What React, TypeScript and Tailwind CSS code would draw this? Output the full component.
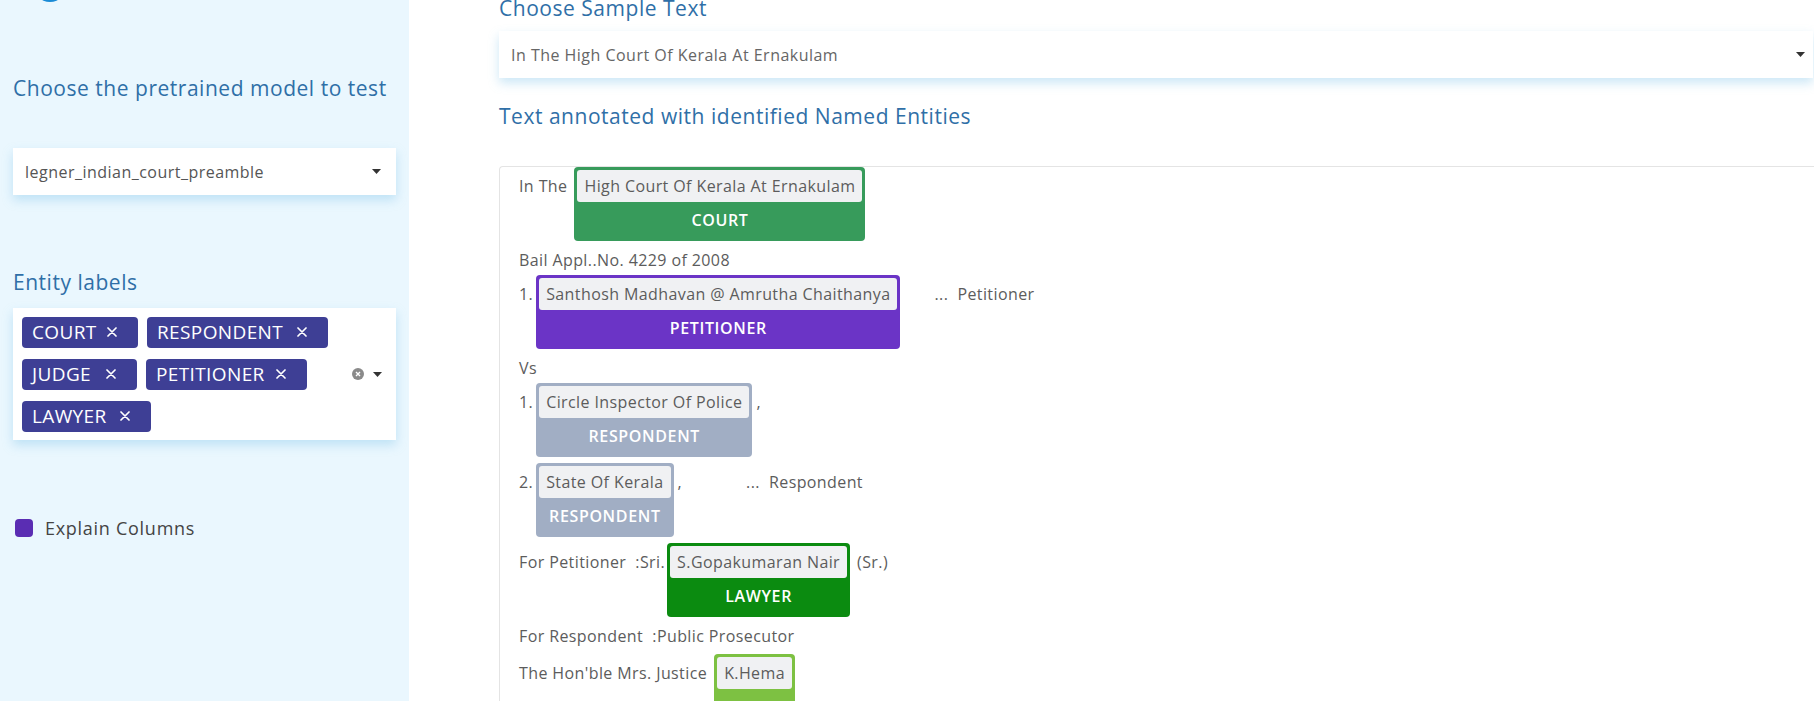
import type { ReactNode } from 'react'

/**
 * NER demo page: sidebar with model / label pickers, main column with the
 * sample-text select and the annotated preamble.
 */

const font = { fontFamily: '"Open Sans", "Noto Sans", sans-serif' }

function Caret() {
  return (
    <svg width="9" height="5" viewBox="0 0 9 5" className="shrink-0">
      <path d="M0 0h9L4.5 5z" fill="#333" />
    </svg>
  )
}

function Tag({ label, width }: { label: string; width: string }) {
  return (
    <span
      className={`flex h-[31px] items-center rounded-[4px] bg-[#3e3f95] pl-[10px] text-[19px] leading-none tracking-[0.02em] text-white ${width}`}
    >
      <span className="whitespace-nowrap">{label}</span>
      <svg width="10" height="10" viewBox="0 0 10 10" className="ml-auto mr-[21px] shrink-0">
        <path d="M1 1l8 8M9 1l-8 8" stroke="#fff" strokeWidth="1.7" strokeLinecap="round" />
      </svg>
    </span>
  )
}

function Entity({ text, label, color }: { text: string; label: string; color: string }) {
  return (
    <span className={`inline-flex shrink-0 flex-col rounded-[4px] p-[3px] ${color}`}>
      <span className="h-[32px] whitespace-nowrap rounded-[3px] bg-[#f0f1f3] px-[7px] leading-[32px] text-[#5c5c5c]">
        {text}
      </span>
      <span className="h-[36px] text-center text-[16px] font-semibold leading-[36px] tracking-[0.04em] text-white">
        {label}
      </span>
    </span>
  )
}

function Txt({ children, className = '' }: { children: ReactNode; className?: string }) {
  return (
    <span className={`mt-[3px] h-[32px] shrink-0 whitespace-pre leading-[32px] ${className}`}>
      {children}
    </span>
  )
}

function Row({ children, last }: { children: ReactNode; last?: boolean }) {
  return <div className={`flex shrink-0 items-start ${last ? '' : 'mb-[6px]'}`}>{children}</div>
}

function Line({ children, className = 'mb-[2px]' }: { children: ReactNode; className?: string }) {
  return <div className={`h-[26px] shrink-0 whitespace-pre leading-[26px] ${className}`}>{children}</div>
}

export default function App() {
  return (
    <div className="flex h-[701px] w-[1814px] overflow-hidden bg-white" style={font}>
      {/* Sidebar */}
      <aside className="flex w-[409px] shrink-0 flex-col bg-[#eaf7fe] px-[13px]">
        <div className="-mt-[32px] ml-[20px] h-[34px] w-[34px] shrink-0 rounded-full bg-[#1a8bd6]" />

        <h2 className="mt-[72px] h-[28px] shrink-0 text-[21px] leading-[28px] tracking-[0.025em] text-[#2f6fa7]">
          Choose the pretrained model to test
        </h2>

        <div className="mt-[46px] flex h-[47px] shrink-0 items-center justify-between bg-white pl-[12px] pr-[15px] shadow-[0_5px_10px_rgba(110,185,230,0.35)]">
          <span className="text-[16px] tracking-[0.03em] text-[#555]">legner_indian_court_preamble</span>
          <Caret />
        </div>

        <h2 className="mt-[73px] h-[28px] shrink-0 text-[21px] leading-[28px] tracking-[0.025em] text-[#2f6fa7]">
          Entity labels
        </h2>

        <div className="mt-[12px] flex h-[132px] shrink-0 items-center bg-white pl-[9px] pr-[14px] shadow-[0_5px_10px_rgba(110,185,230,0.35)]">
          <div className="flex w-[320px] flex-wrap gap-x-[9px] gap-y-[11px]">
            <Tag label="COURT" width="w-[116px]" />
            <Tag label="RESPONDENT" width="w-[181px]" />
            <Tag label="JUDGE" width="w-[115px]" />
            <Tag label="PETITIONER" width="w-[161px]" />
            <Tag label="LAWYER" width="w-[129px]" />
          </div>
          <div className="ml-auto flex items-center gap-[9px]">
            <svg width="12" height="12" viewBox="0 0 12 12">
              <circle cx="6" cy="6" r="6" fill="#8a8a8a" />
              <path d="M4 4l4 4M8 4l-4 4" stroke="#fff" strokeWidth="1.4" />
            </svg>
            <Caret />
          </div>
        </div>

        <label className="mt-[76px] flex h-[24px] shrink-0 items-center gap-[12px] pl-[2px]">
          <span className="h-[18px] w-[18px] rounded-[4px] bg-[#5a2db3]" />
          <span className="text-[18px] tracking-[0.04em] text-[#444]">Explain Columns</span>
        </label>
      </aside>

      {/* Main */}
      <main className="flex min-w-0 flex-1 flex-col pl-[90px]">
        <h2 className="h-[16px] shrink-0 text-[21px] leading-[16px] tracking-[0.025em] text-[#2f6fa7]">
          Choose Sample Text
        </h2>

        <div className="mt-[15px] mr-[1px] flex h-[47px] shrink-0 items-center justify-between bg-white pl-[12px] pr-[8px] shadow-[0_5px_10px_rgba(110,185,230,0.35)]">
          <span className="text-[16px] tracking-[0.03em] text-[#666]">In The High Court Of Kerala At Ernakulam</span>
          <Caret />
        </div>

        <h2 className="mt-[24px] h-[28px] shrink-0 text-[21px] leading-[28px] tracking-[0.025em] text-[#2f6fa7]">
          Text annotated with identified Named Entities
        </h2>

        <div className="mt-[36px] flex flex-1 flex-col rounded-tl-[4px] border-l border-t border-[#e4e4e4] pl-[19px] text-[16px] tracking-[0.025em] text-[#5c5c5c]">
          <Row>
            <Txt className="mr-[7px]">In The</Txt>
            <Entity text="High Court Of Kerala At Ernakulam" label="COURT" color="bg-[#379b5b]" />
          </Row>
          <Line>Bail Appl..No. 4229 of 2008</Line>
          <Row>
            <Txt className="mr-[3px]">1.</Txt>
            <Entity text="Santhosh Madhavan @ Amrutha Chaithanya" label="PETITIONER" color="bg-[#6b34c6]" />
            <Txt className="ml-[34px]">...  Petitioner</Txt>
          </Row>
          <Line>Vs</Line>
          <Row>
            <Txt className="mr-[3px]">1.</Txt>
            <Entity text="Circle Inspector Of Police" label="RESPONDENT" color="bg-[#a1aec4]" />
            <Txt className="ml-[4px]">,</Txt>
          </Row>
          <Row>
            <Txt className="mr-[3px]">2.</Txt>
            <Entity text="State Of Kerala" label="RESPONDENT" color="bg-[#a1aec4]" />
            <Txt className="ml-[4px]">,</Txt>
            <Txt className="ml-[64px]">...  Respondent</Txt>
          </Row>
          <Row>
            <Txt className="mr-[2px]">For Petitioner  :Sri.</Txt>
            <Entity text="S.Gopakumaran Nair" label="LAWYER" color="bg-[#0b8b10]" />
            <Txt className="ml-[7px]">(Sr.)</Txt>
          </Row>
          <Line className="mb-[5px]">For Respondent  :Public Prosecutor</Line>
          <Row last>
            <Txt className="mr-[7px]">The Hon'ble Mrs. Justice</Txt>
            <Entity text="K.Hema" label="JUDGE" color="bg-[#7dc142]" />
          </Row>
        </div>
      </main>
    </div>
  )
}
